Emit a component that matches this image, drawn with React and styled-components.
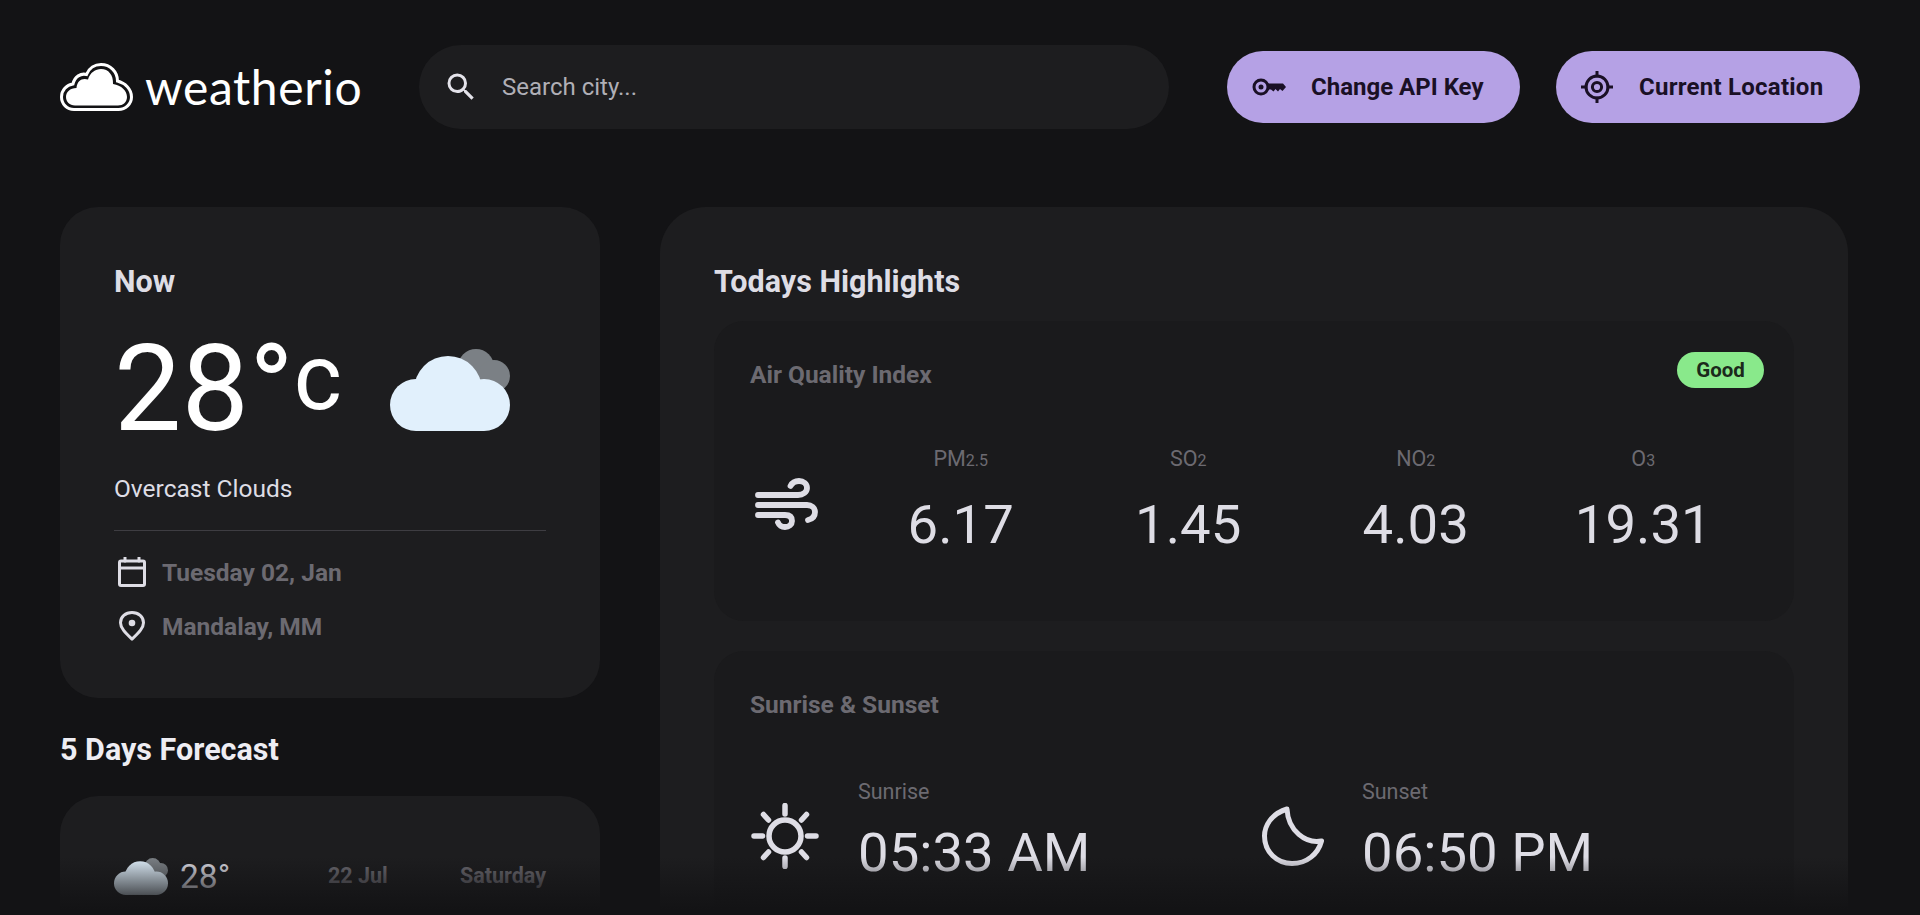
import styled, { createGlobalStyle } from "styled-components";
import { MdSearch } from "react-icons/md";

const airData = [
  { name: "PM", sub: "2.5", value: "6.17" },
  { name: "SO", sub: "2", value: "1.45" },
  { name: "NO", sub: "2", value: "4.03" },
  { name: "O", sub: "3", value: "19.31" },
];

const CloudLogo = () => (
  <svg width="73" height="48" viewBox="0 0 73 48">
    <path
      d="M14 46.5C7 46.5 1.5 41 1.5 34C1.5 27 6.500 22 13 21C14.500 13.500 21 10 26.500 11.500C29 5 35 1.500 41 1.500C50.500 1.500 57.500 9 57.500 18C65 20 71.500 26 71.500 34C71.500 41 65.500 46.500 58.500 46.500Z"
      fill="none"
      stroke="#fff"
      strokeWidth="3"
    />
    <path
      d="M15 42.500C9.500 42.500 6 38.500 6 34C6 29 10 25 16.500 25C17 17.500 22.500 14.500 28 16.500C30 9.500 35.500 6 41 6C48.500 6 53.500 12 53 21C61.500 22.500 67 27.500 67 34C67 39 63 42.500 58 42.500Z"
      fill="#fff"
    />
  </svg>
);

const KeyIcon = () => (
  <svg width="34" height="18" viewBox="0 0 34 18">
    <circle cx="9" cy="9" r="7" fill="none" stroke="#1a1025" strokeWidth="3" />
    <circle cx="9" cy="9" r="2.500" fill="#1a1025" />
    <path d="M15 5.500H31L34 9L30.500 13L28 11L26 13.500L23.500 11L21.500 13.500L19 11.500H15Z" fill="#1a1025" />
  </svg>
);

const TargetIcon = () => (
  <svg width="32" height="32" viewBox="0 0 32 32" fill="none" stroke="#1a1025" strokeWidth="3">
    <circle cx="16" cy="16" r="11" />
    <circle cx="16" cy="16" r="4.600" />
    <path d="M16 0.500V5M16 27V31.500M0.500 16H5M27 16H31.500" strokeLinecap="round" />
  </svg>
);

const WeatherCloud = ({ width, height }) => (
  <svg width={width} height={height} viewBox="0 0 120 82">
    <g fill="#7b8085">
      <circle cx="86" cy="18" r="18" />
      <circle cx="104" cy="27" r="16" />
    </g>
    <g fill="#e1f0fc">
      <circle cx="58" cy="41" r="34" />
      <circle cx="26" cy="56" r="26" />
      <circle cx="94" cy="56" r="26" />
      <rect x="26" y="50" width="68" height="32" />
    </g>
  </svg>
);

const CalendarIcon = () => (
  <svg width="28" height="30" viewBox="0 0 28 30" fill="none" stroke="#dedde5" strokeWidth="3">
    <rect x="1.500" y="4" width="25" height="24.500" rx="1.500" />
    <path d="M1.500 11H26.500" />
    <path d="M7 0.500V4M21 0.500V4" strokeLinecap="round" />
  </svg>
);

const PinIcon = () => (
  <svg width="26" height="30" viewBox="0 0 26 30">
    <path
      d="M13 28.200C6 21.500 1.500 17 1.500 11.700C1.500 5.800 6.500 1.500 13 1.500C19.500 1.500 24.500 5.800 24.500 11.700C24.500 17 20 21.500 13 28.200Z"
      fill="none"
      stroke="#dedde5"
      strokeWidth="3"
      strokeLinejoin="round"
    />
    <circle cx="13" cy="12" r="3.300" fill="#dedde5" />
  </svg>
);

const WindIcon = () => (
  <svg width="63" height="52" viewBox="0 0 63 52" fill="none" stroke="#dedde5" strokeWidth="5.800" strokeLinecap="round">
    <path d="M3 17H43C48 17 52 14 52 10C52 6 48.500 3 44 3C40 3 37 5 35.500 8" />
    <path d="M3 27H52C56.500 27 60 30 60 34C60 38 57.500 41 53 42" />
    <path d="M3 37H30C34.500 37 37 39 37 43C37 46.500 34 49 30 49C26.500 49 24 47 23 44.500" />
  </svg>
);

const SunIcon = () => (
  <svg width="68" height="66" viewBox="0 0 68 66" fill="none" stroke="#dedde5" strokeWidth="5.500" strokeLinecap="round">
    <circle cx="34" cy="33" r="16" />
    <path d="M34 2.500V11M34 55V63.500M3 33H11.500M56.500 33H65M12.500 11.500L17.500 17M50.500 49L55.500 54.500M55.500 11.500L50.500 17M17.500 49L12.500 54.500" />
  </svg>
);

const MoonIcon = () => (
  <svg width="62" height="60" viewBox="0 0 62 60" fill="none" stroke="#dedde5" strokeWidth="5" strokeLinejoin="round">
    <path d="M25 3C9 8 2.500 20 2.500 30C2.500 46 15 57.500 30 57.500C45 57.500 56 48 59.500 35C44 38 26 25 25 3Z" />
  </svg>
);

const App = () => {
  return (
    <Page>
      <GlobalStyle />
      <Header>
        <Logo>
          <CloudLogo />
          <LogoText>weatherio</LogoText>
        </Logo>
        <SearchBox>
          <MdSearch size={36} color="#e4e3ea" />
          <SearchInput placeholder="Search city..." readOnly />
        </SearchBox>
        <Actions>
          <ActionButton $width={293} $gap={25}>
            <KeyIcon />
            Change API Key
          </ActionButton>
          <ActionButton $width={304} $gap={26} $spacing={0.25}>
            <TargetIcon />
            Current Location
          </ActionButton>
        </Actions>
      </Header>

      <Main>
        <LeftColumn>
          <NowCard>
            <CardHeading>Now</CardHeading>
            <NowRow>
              <BigTemp>
                28°<sup>c</sup>
              </BigTemp>
              <WeatherCloud width={120} height={82} />
            </NowRow>
            <Condition>Overcast Clouds</Condition>
            <MetaList>
              <MetaRow>
                <MetaIcon>
                  <CalendarIcon />
                </MetaIcon>
                Tuesday 02, Jan
              </MetaRow>
              <MetaRow>
                <MetaIcon>
                  <PinIcon />
                </MetaIcon>
                Mandalay, MM
              </MetaRow>
            </MetaList>
          </NowCard>
          <ForecastHeading>5 Days Forecast</ForecastHeading>
          <ForecastCard>
            <ForecastRow>
              <ForecastTemp>
                <WeatherCloud width={54} height={37} />
                28°
              </ForecastTemp>
              <ForecastLabel>22 Jul</ForecastLabel>
              <ForecastLabel>Saturday</ForecastLabel>
            </ForecastRow>
          </ForecastCard>
        </LeftColumn>

        <Highlights>
          <HighlightsHeading>Todays Highlights</HighlightsHeading>
          <InnerCard>
            <InnerTitle>Air Quality Index</InnerTitle>
            <Badge>Good</Badge>
            <AirRow>
              <WindSlot>
                <WindIcon />
              </WindSlot>
              <AirGrid>
                {airData.map(({ name, sub, value }) => (
                  <AirItem key={name}>
                    <AirLabel>
                      {name}
                      <small>{sub}</small>
                    </AirLabel>
                    <AirValue>{value}</AirValue>
                  </AirItem>
                ))}
              </AirGrid>
            </AirRow>
          </InnerCard>
          <InnerCard>
            <InnerTitle>Sunrise &amp; Sunset</InnerTitle>
            <SunRow>
              <SunItem $indent={1} $gap={39}>
                <SunIcon />
                <div>
                  <SunLabel>Sunrise</SunLabel>
                  <SunValue>05:33 AM</SunValue>
                </div>
              </SunItem>
              <SunItem $indent={0} $gap={38}>
                <MoonIcon />
                <div>
                  <SunLabel>Sunset</SunLabel>
                  <SunValue>06:50 PM</SunValue>
                </div>
              </SunItem>
            </SunRow>
          </InnerCard>
        </Highlights>
      </Main>
      <BottomFade />
    </Page>
  );
};

export default App;

const GlobalStyle = createGlobalStyle`
  * {
    box-sizing: border-box;
  }
  html, body {
    margin: 0;
    height: 100%;
    background: #131315;
    overflow: hidden;
  }
  body {
    font-family: Roboto, "Liberation Sans", sans-serif;
    color: #dedde5;
  }
`;

const Page = styled.div`
  position: relative;
  height: 100vh;
  overflow: hidden;
  background: #131315;
`;

const Header = styled.header`
  display: flex;
  align-items: center;
  height: 84px;
  margin-top: 45px;
  padding: 0 60px;
`;

const Logo = styled.div`
  display: flex;
  align-items: center;
  gap: 12px;
  width: 359px;
  height: 48px;
`;

const LogoText = styled.span`
  font-family: Lato, sans-serif;
  font-size: 48px;
  line-height: 48px;
  color: #fff;
  letter-spacing: 0.6px;
`;

const SearchBox = styled.div`
  display: flex;
  align-items: center;
  gap: 21px;
  width: 750px;
  height: 84px;
  padding-left: 24px;
  border-radius: 42px;
  background: #1d1d1f;
`;

const SearchInput = styled.input`
  flex: 1;
  border: 0;
  outline: 0;
  background: transparent;
  font-family: inherit;
  font-size: 24px;
  color: #dedde5;

  &::placeholder {
    color: #b0afb6;
    opacity: 1;
  }
`;

const Actions = styled.div`
  display: flex;
  gap: 36px;
  margin-left: 58px;
`;

const ActionButton = styled.button`
  display: flex;
  align-items: center;
  gap: ${(p) => p.$gap}px;
  width: ${(p) => p.$width}px;
  height: 72px;
  padding: 0 0 0 25px;
  border: 0;
  border-radius: 36px;
  background: #b5a1e5;
  color: #1a1025;
  font-family: inherit;
  font-size: 24px;
  font-weight: 700;
  letter-spacing: ${(p) => p.$spacing || 0}px;
`;

const Main = styled.main`
  display: grid;
  grid-template-columns: 540px 1188px;
  column-gap: 60px;
  padding: 78px 0 0 60px;
`;

const LeftColumn = styled.div`
  display: flex;
  flex-direction: column;
`;

const NowCard = styled.section`
  height: 491px;
  padding: 55px 54px;
  border-radius: 38px;
  background: #1d1d1f;
`;

const CardHeading = styled.h2`
  margin: 0;
  font-size: 30.500px;
  line-height: 40px;
  font-weight: 700;
  color: #dedde5;
`;

const NowRow = styled.div`
  display: flex;
  justify-content: space-between;
  align-items: flex-end;
  margin-top: 21px;
  height: 110px;
  padding: 0 36px 2px 0;
`;

const BigTemp = styled.div`
  height: 108px;
  font-size: 120px;
  line-height: 132px;
  color: #fff;

  sup {
    font-size: 92px;
    line-height: 0;
    vertical-align: 21px;
  }
`;

const Condition = styled.p`
  margin: 41px 0 0;
  font-size: 24.500px;
  line-height: 30px;
  color: #dedde5;
  padding-bottom: 26px;
  border-bottom: 1px solid #3e3d42;
`;

const MetaList = styled.div`
  display: flex;
  flex-direction: column;
  gap: 24px;
  margin-top: 26px;
`;

const MetaRow = styled.div`
  display: flex;
  align-items: center;
  gap: 12px;
  height: 30px;
  font-size: 24.500px;
  font-weight: 700;
  color: #6c6a71;
`;

const MetaIcon = styled.span`
  display: flex;
  justify-content: center;
  width: 36px;
`;

const ForecastHeading = styled(CardHeading)`
  margin-top: 32px;
  color: #eeedf3;
`;

const HighlightsHeading = styled(CardHeading)`
  margin-bottom: 19px;
`;

const ForecastCard = styled.section`
  height: 200px;
  margin-top: 26px;
  padding: 62px 54px 0;
  border-radius: 38px;
  background: #1d1d1f;
`;

const ForecastRow = styled.div`
  display: grid;
  grid-template-columns: 214px 132px 1fr;
  align-items: center;
  height: 37px;
`;

const ForecastTemp = styled.div`
  display: flex;
  align-items: center;
  gap: 12px;
  font-size: 33.500px;
  line-height: 36px;
  color: #dedde5;
`;

const ForecastLabel = styled.span`
  padding-bottom: 3px;
  font-size: 21.500px;
  font-weight: 700;
  color: #6c6a71;
`;

const Highlights = styled.section`
  height: 900px;
  padding: 55px 54px 0;
  border-radius: 46px;
  background: #1d1d1f;
  display: flex;
  flex-direction: column;
`;

const InnerCard = styled.div`
  position: relative;
  flex: none;
  height: 300px;
  margin-bottom: 30px;
  padding: 36px;
  border-radius: 30px;
  background: #1a1a1c;
`;

const InnerTitle = styled.h3`
  margin: 0;
  font-size: 24.500px;
  line-height: 36px;
  font-weight: 700;
  color: #6c6a71;
`;

const Badge = styled.span`
  position: absolute;
  top: 31px;
  right: 30px;
  width: 87px;
  height: 36px;
  border-radius: 18px;
  background: #89e98b;
  color: #1b2a1b;
  font-size: 20.500px;
  font-weight: 700;
  line-height: 36px;
  text-align: center;
`;

const AirRow = styled.div`
  display: flex;
  margin-top: 52px;
`;

const WindSlot = styled.div`
  width: 97px;
  padding: 33px 0 0 5px;
`;

const AirGrid = styled.div`
  display: grid;
  grid-template-columns: repeat(4, 227.500px);
`;

const AirItem = styled.div`
  text-align: center;
`;

const AirLabel = styled.div`
  font-size: 21.500px;
  line-height: 28px;
  color: #6c6a71;

  small {
    font-size: 16px;
  }
`;

const AirValue = styled.div`
  margin-top: 17px;
  font-size: 54.500px;
  line-height: 64px;
  color: #dedde5;
`;

const SunValue = styled(AirValue)`
  margin-top: 15px;
`;

const SunRow = styled.div`
  display: grid;
  grid-template-columns: 512px 1fr;
  margin-top: 56px;
`;

const SunItem = styled.div`
  display: flex;
  align-items: center;
  gap: ${(p) => p.$gap}px;
  padding-left: ${(p) => p.$indent}px;

  svg {
    margin-top: 8px;
  }
`;

const SunLabel = styled.div`
  font-size: 21.500px;
  line-height: 26px;
  color: #6c6a71;
`;

const BottomFade = styled.div`
  position: absolute;
  left: 0;
  right: 0;
  bottom: 0;
  height: 58px;
  background: linear-gradient(to bottom, rgba(19, 19, 21, 0), #131315 90%);
`;
